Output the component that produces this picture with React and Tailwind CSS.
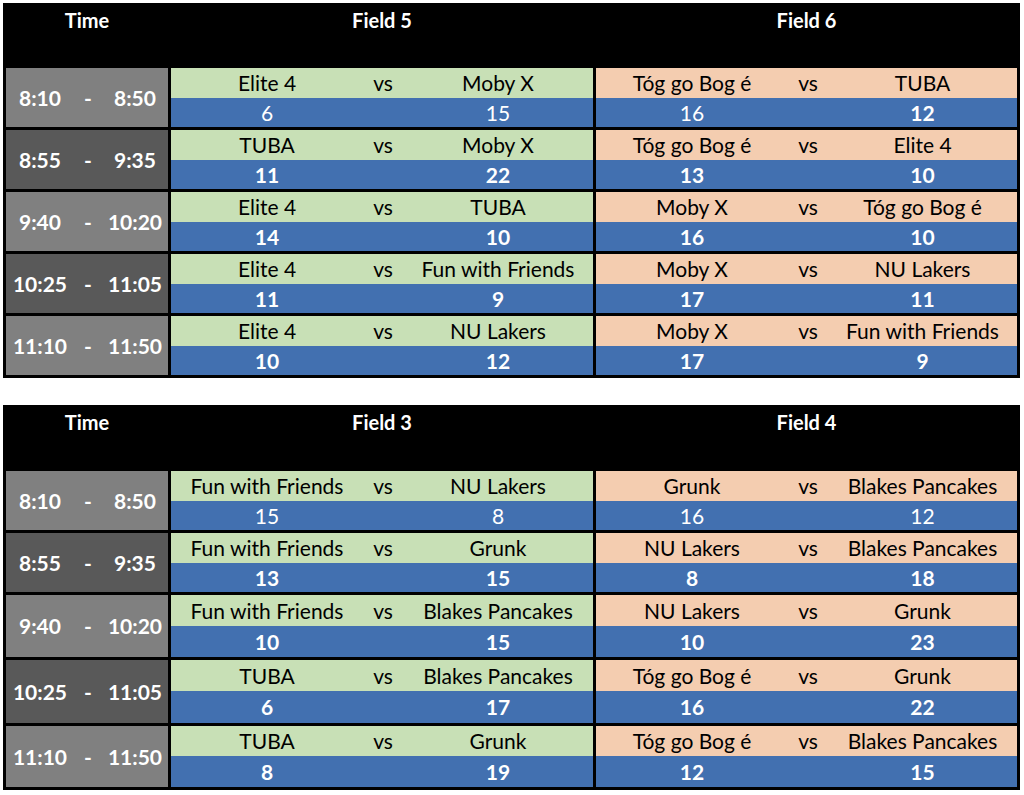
import React from "react";

const t1 = {
  fields: ["Field 5", "Field 6"],
  header: 59,
  rows: [
    { time: ["8:10", "8:50"], h: [30, 29], games: [["Elite 4", "Moby X", 6, 15, false, false], ["Tóg go Bog é", "TUBA", 16, 12, false, true]] },
    { time: ["8:55", "9:35"], h: [30, 29], games: [["TUBA", "Moby X", 11, 22, true, true], ["Tóg go Bog é", "Elite 4", 13, 10, true, true]] },
    { time: ["9:40", "10:20"], h: [30, 29], games: [["Elite 4", "TUBA", 14, 10, true, true], ["Moby X", "Tóg go Bog é", 16, 10, true, true]] },
    { time: ["10:25", "11:05"], h: [30, 29], games: [["Elite 4", "Fun with Friends", 11, 9, true, true], ["Moby X", "NU Lakers", 17, 11, true, true]] },
    { time: ["11:10", "11:50"], h: [30, 29], games: [["Elite 4", "NU Lakers", 10, 12, true, true], ["Moby X", "Fun with Friends", 17, 9, true, true]] },
  ],
};

const t2 = {
  fields: ["Field 3", "Field 4"],
  header: 60,
  rows: [
    { time: ["8:10", "8:50"], h: [30, 29], games: [["Fun with Friends", "NU Lakers", 15, 8, false, false], ["Grunk", "Blakes Pancakes", 16, 12, false, false]] },
    { time: ["8:55", "9:35"], h: [30, 29], games: [["Fun with Friends", "Grunk", 13, 15, true, true], ["NU Lakers", "Blakes Pancakes", 8, 18, true, true]] },
    { time: ["9:40", "10:20"], h: [31, 31], games: [["Fun with Friends", "Blakes Pancakes", 10, 15, true, true], ["NU Lakers", "Grunk", 10, 23, true, true]] },
    { time: ["10:25", "11:05"], h: [31, 32], games: [["TUBA", "Blakes Pancakes", 6, 17, true, true], ["Tóg go Bog é", "Grunk", 16, 22, true, true]] },
    { time: ["11:10", "11:50"], h: [30, 31], games: [["TUBA", "Grunk", 8, 19, true, true], ["Tóg go Bog é", "Blakes Pancakes", 12, 15, true, true]] },
  ],
};

function Game({ g, peach, h }) {
  const [a, b, sa, sb, ba, bb] = g;
  return (
    <div className="flex flex-col">
      <div
        className={`grid grid-cols-[192px_40px_1fr] items-center text-[21px] leading-[26px] text-black ${peach ? "bg-[#f4cdb0]" : "bg-[#c8e0b6]"}`}
        style={{ height: h[0] }}
      >
        <div className="text-center whitespace-nowrap">{a}</div>
        <div className="text-center">vs</div>
        <div className="text-center whitespace-nowrap">{b}</div>
      </div>
      <div
        className="grid grid-cols-[192px_40px_1fr] items-center bg-[#4270b0] text-[21px] leading-[26px] text-white"
        style={{ height: h[1] }}
      >
        <div className={`text-center ${ba ? "font-bold" : "font-normal"}`}>{sa}</div>
        <div />
        <div className={`text-center ${bb ? "font-bold" : "font-normal"}`}>{sb}</div>
      </div>
    </div>
  );
}

function Table({ data }) {
  return (
    <div className="w-[1017px] bg-black p-[3px] flex flex-col gap-[3px]">
      <div
        className="grid grid-cols-[162px_422px_421px] gap-x-[3px] text-white font-bold text-[20px]"
        style={{ height: data.header }}
      >
        <div className="text-center pt-[2px] leading-[24px]">Time</div>
        <div className="text-center pt-[2px] leading-[24px]">{data.fields[0]}</div>
        <div className="text-center pt-[2px] leading-[24px]">{data.fields[1]}</div>
      </div>
      {data.rows.map((r, i) => (
        <div key={i} className="grid grid-cols-[162px_422px_421px] gap-x-[3px]">
          <div
            className={`grid grid-cols-[66px_32px_1fr] items-center text-white font-bold text-[21px] ${i % 2 === 0 ? "bg-[#808080]" : "bg-[#595959]"}`}
          >
            <div className="text-center pl-[2px]">{r.time[0]}</div>
            <div className="text-center">-</div>
            <div className="text-center pr-[2px]">{r.time[1]}</div>
          </div>
          <Game g={r.games[0]} peach={false} h={r.h} />
          <Game g={r.games[1]} peach={true} h={r.h} />
        </div>
      ))}
    </div>
  );
}

export default function App() {
  return (
    <div className="w-[1024px] h-[795px] bg-white pt-[3px] pl-[3px] flex flex-col gap-[27px] font-['Lato',_sans-serif]">
      <Table data={t1} />
      <Table data={t2} />
    </div>
  );
}
